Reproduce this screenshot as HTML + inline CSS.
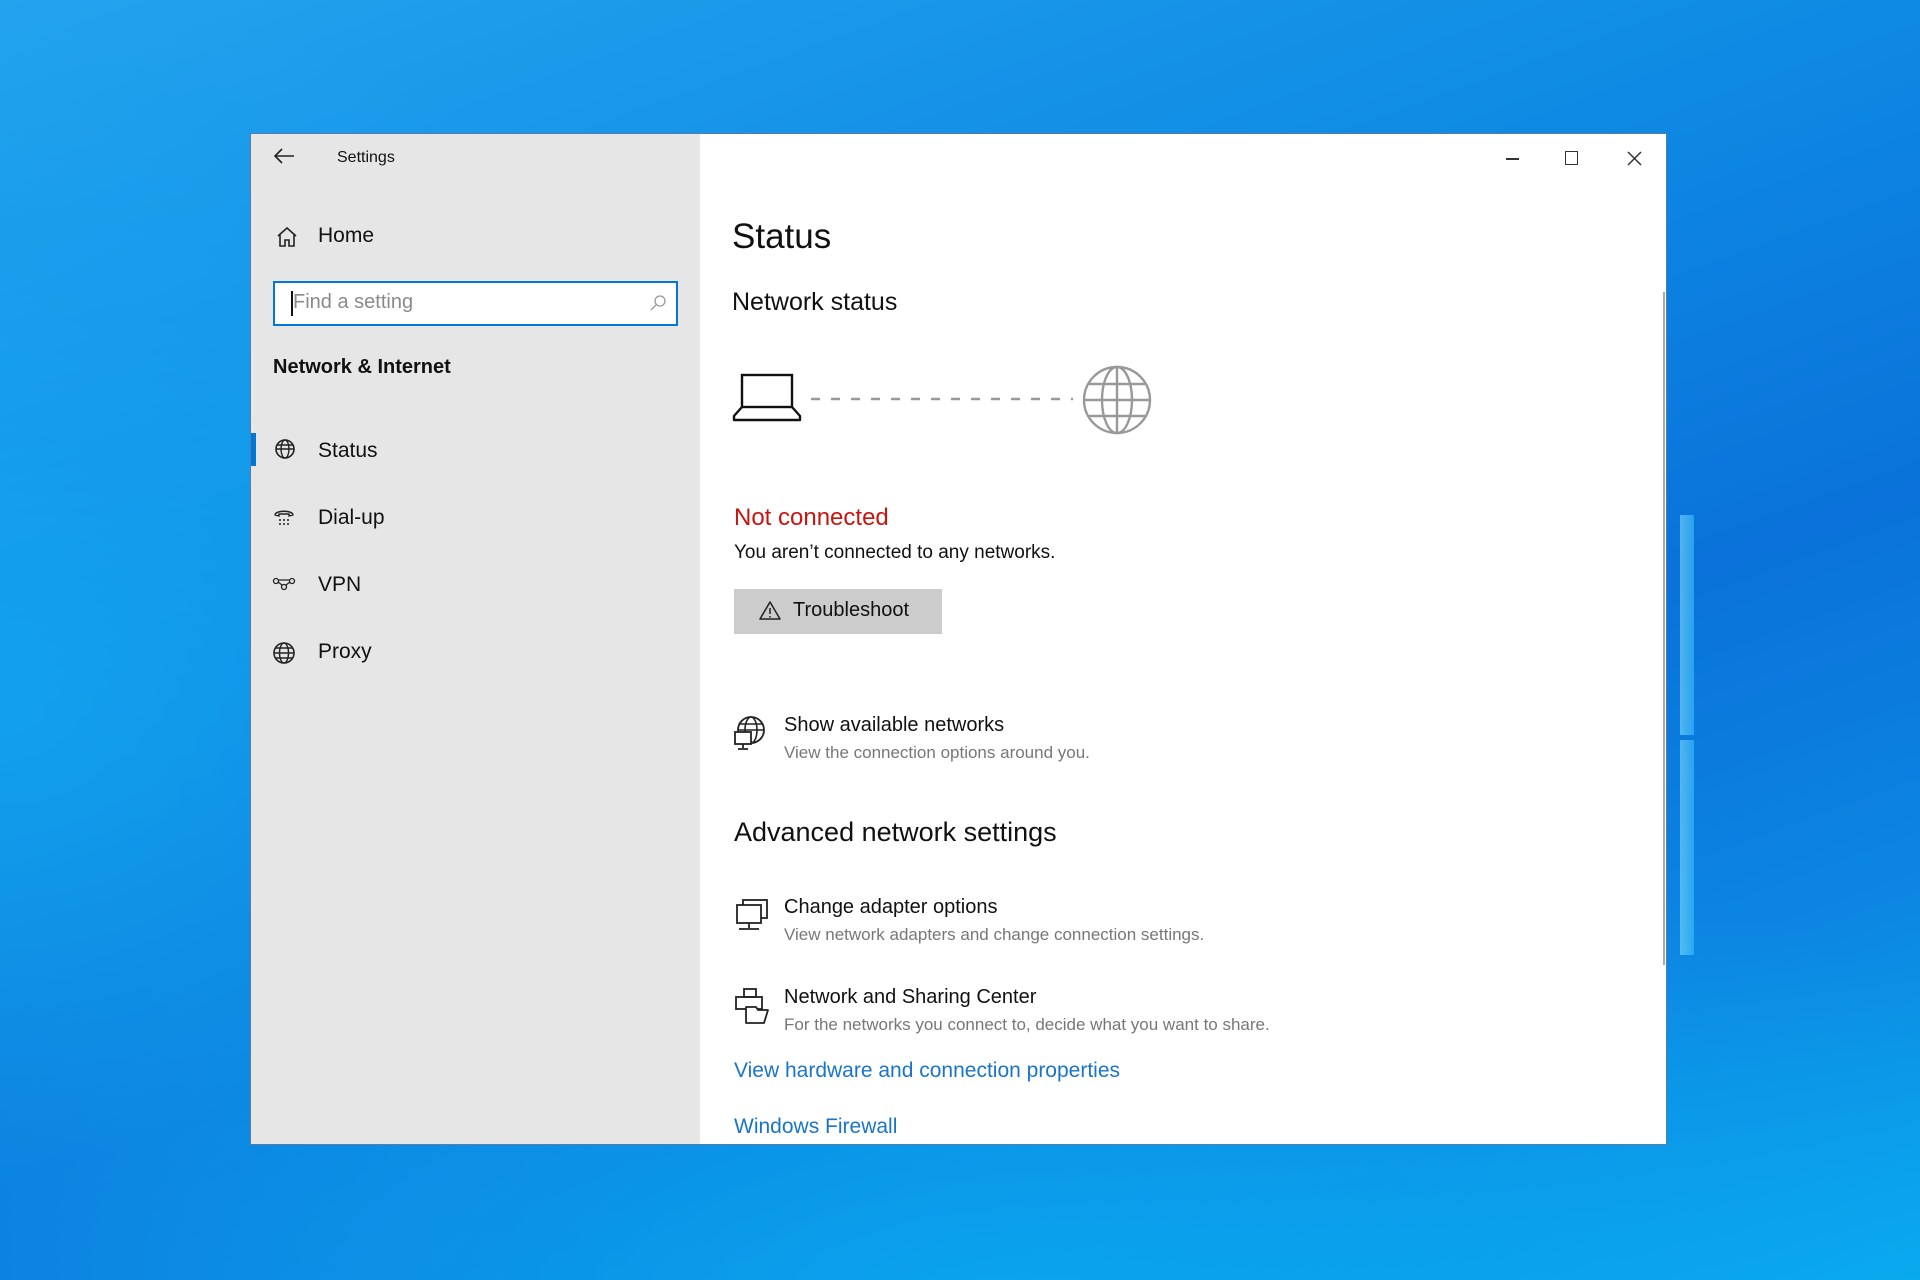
<!DOCTYPE html>
<html><head><meta charset="utf-8"><style>
*{margin:0;padding:0;box-sizing:border-box}
body{width:1920px;height:1280px;overflow:hidden;position:relative;font-family:"Liberation Sans",sans-serif;
background:
radial-gradient(ellipse 900px 700px at 0px 700px,rgba(20,170,240,.7),rgba(20,170,240,0)),
radial-gradient(ellipse 1200px 500px at 1000px 1300px,rgba(10,170,240,.8),rgba(10,170,240,0)),
linear-gradient(160deg,#23a3ee 0%,#0e8ae4 35%,#0a72da 60%,#0c86e2 80%,#0aaaee 100%);}
.a{position:absolute;white-space:nowrap}
.win{position:absolute;left:250px;top:133px;width:1417px;height:1012px;background:#fff;border:1px solid #5a7aa8}
.side{position:absolute;left:0;top:0;width:449px;height:100%;background:#e6e6e6}
.t{color:#111}
.sub{color:#777;font-size:17px}
.lnk{color:#1a75c9;font-size:21px}
</style></head><body>
<div class="a" style="left:1680px;top:515px;width:14px;height:220px;background:linear-gradient(90deg,#8fe6ff,#3cc6ff);opacity:.55"></div>
<div class="a" style="left:1680px;top:740px;width:14px;height:215px;background:linear-gradient(90deg,#8fe6ff,#3cc6ff);opacity:.55"></div>
<div class="win">
 <div class="side">
  <svg class="a" style="left:23px;top:14px" width="22" height="16" viewBox="0 0 22 16"><path d="M20 8H2M8 1L1 8l7 7" fill="none" stroke="#222" stroke-width="1.6"/></svg>
  <div class="a t" style="left:86px;top:15px;font-size:16px">Settings</div>
  <svg class="a" style="left:25px;top:93px" width="22" height="20" viewBox="0 0 22 20"><path d="M2 9L11 1l9 8M4 8v11h5v-6h4v6h5V8" fill="none" stroke="#222" stroke-width="1.6"/></svg>
  <div class="a t" style="left:67px;top:90px;font-size:21px">Home</div>
  <div class="a" style="left:22px;top:147px;width:405px;height:45px;border:2px solid #0078d7;background:#fff"></div>
  <div class="a" style="left:40px;top:157px;width:1.5px;height:25px;background:#111"></div>
  <div class="a" style="left:42px;top:157px;font-size:20px;color:#8a8a8a">Find a setting</div>
  <svg class="a" style="left:398px;top:160px" width="18" height="18" viewBox="0 0 18 18"><circle cx="11" cy="7" r="5" fill="none" stroke="#999" stroke-width="1.3"/><path d="M7 11L2 16" stroke="#999" stroke-width="1.3"/></svg>
  <div class="a t" style="left:22px;top:222px;font-size:20px;font-weight:bold">Network &amp; Internet</div>
  <div class="a" style="left:0;top:299px;width:5px;height:33px;background:#0078d7"></div>
  <svg class="a" style="left:22px;top:305px" width="24" height="22" viewBox="0 0 24 22"><circle cx="12" cy="10" r="9" fill="none" stroke="#222" stroke-width="1.6"/><ellipse cx="12" cy="10" rx="4" ry="9" fill="none" stroke="#222" stroke-width="1.4"/><path d="M3 10h18M4 6h16" stroke="#222" stroke-width="1.4"/></svg>
  <div class="a t" style="left:67px;top:305px;font-size:21px">Status</div>
  <svg class="a" style="left:22px;top:374px" width="22" height="20" viewBox="0 0 22 20"><path d="M2 7c0-5 18-5 18 0l-4 1V6H6v2z" fill="none" stroke="#222" stroke-width="1.4"/><g fill="#222"><circle cx="7" cy="12" r="1"/><circle cx="11" cy="12" r="1"/><circle cx="15" cy="12" r="1"/><circle cx="7" cy="16" r="1"/><circle cx="11" cy="16" r="1"/><circle cx="15" cy="16" r="1"/></g></svg>
  <div class="a t" style="left:67px;top:372px;font-size:21px">Dial-up</div>
  <svg class="a" style="left:21px;top:442px" width="24" height="16" viewBox="0 0 24 16"><circle cx="4" cy="5" r="2.5" fill="none" stroke="#222" stroke-width="1.3"/><circle cx="20" cy="5" r="2.5" fill="none" stroke="#222" stroke-width="1.3"/><circle cx="12" cy="11" r="2.5" fill="none" stroke="#222" stroke-width="1.3"/><path d="M6 6l4 3M18 6l-4 3M7 4h10" stroke="#222" stroke-width="1.3" fill="none"/></svg>
  <div class="a t" style="left:67px;top:439px;font-size:21px">VPN</div>
  <svg class="a" style="left:21px;top:507px" width="24" height="24" viewBox="0 0 24 24"><circle cx="12" cy="12" r="10" fill="none" stroke="#222" stroke-width="1.6"/><ellipse cx="12" cy="12" rx="4.5" ry="10" fill="none" stroke="#222" stroke-width="1.4"/><path d="M2 12h20M4 7h16M4 17h16" stroke="#222" stroke-width="1.4"/></svg>
  <div class="a t" style="left:67px;top:506px;font-size:21px">Proxy</div>
 </div>
 <div class="a" style="left:1255px;top:24px;width:13px;height:1.5px;background:#333"></div>
 <div class="a" style="left:1314px;top:17px;width:13px;height:14px;border:1.5px solid #333"></div>
 <svg class="a" style="left:1376px;top:17px" width="15" height="15" viewBox="0 0 15 15"><path d="M1 1l13 13M14 1L1 14" stroke="#333" stroke-width="1.5"/></svg>
 <div class="a" style="left:1412px;top:158px;width:2px;height:673px;background:#aaa"></div>
 <div class="a t" style="left:481px;top:83px;font-size:35px;font-weight:300">Status</div>
 <div class="a t" style="left:481px;top:154px;font-size:25px">Network status</div>
 <svg class="a" style="left:481px;top:238px" width="72" height="52" viewBox="0 0 72 52"><rect x="10" y="3" width="50" height="32" fill="none" stroke="#111" stroke-width="2.4"/><path d="M10 35L2 44v4h66v-4l-8-9" fill="none" stroke="#111" stroke-width="2.4" stroke-linejoin="round"/></svg>
 <svg class="a" style="left:558px;top:262px" width="266" height="6"><line x1="2" y1="3" x2="264" y2="3" stroke="#999" stroke-width="2.4" stroke-dasharray="9,11"/></svg>
 <svg class="a" style="left:830px;top:230px" width="72" height="72" viewBox="0 0 72 72"><circle cx="36" cy="36" r="33" fill="none" stroke="#999" stroke-width="2.4"/><ellipse cx="36" cy="36" rx="15" ry="33" fill="none" stroke="#999" stroke-width="2.4"/><path d="M36 3v66M3 36h66M8 20h56M8 52h56" stroke="#999" stroke-width="2.4"/></svg>
 <div class="a" style="left:483px;top:370px;font-size:24px;color:#c8160e">Not connected</div>
 <div class="a t" style="left:483px;top:408px;font-size:19px">You aren’t connected to any networks.</div>
 <div class="a" style="left:483px;top:455px;width:208px;height:45px;background:#cccccc"></div>
 <svg class="a" style="left:508px;top:466px" width="22" height="20" viewBox="0 0 22 20"><path d="M11 2L1 19h20z" fill="none" stroke="#222" stroke-width="1.5" stroke-linejoin="round"/><path d="M11 8v6M11 16v1.5" stroke="#222" stroke-width="1.5"/></svg>
 <div class="a t" style="left:542px;top:465px;font-size:20px">Troubleshoot</div>
 <svg class="a" style="left:483px;top:582px" width="34" height="36" viewBox="0 0 34 36"><circle cx="17" cy="14" r="13" fill="none" stroke="#222" stroke-width="1.8"/><ellipse cx="17" cy="14" rx="6" ry="13" fill="none" stroke="#222" stroke-width="1.6"/><path d="M4 14h26M6 8h22" stroke="#222" stroke-width="1.6"/><rect x="1" y="16" width="16" height="12" fill="#fff" stroke="#222" stroke-width="1.8"/><path d="M9 28v4M4 33h10" stroke="#222" stroke-width="1.8"/></svg>
 <div class="a t" style="left:533px;top:580px;font-size:20px">Show available networks</div>
 <div class="a sub" style="left:533px;top:609px">View the connection options around you.</div>
 <div class="a t" style="left:483px;top:683px;font-size:27px">Advanced network settings</div>
 <svg class="a" style="left:484px;top:764px" width="34" height="36" viewBox="0 0 34 36"><rect x="8" y="2" width="24" height="18" fill="none" stroke="#222" stroke-width="1.8"/><rect x="2" y="7" width="24" height="18" fill="#fff" stroke="#222" stroke-width="1.8"/><path d="M14 25v5M4 31h20" stroke="#222" stroke-width="1.8"/></svg>
 <div class="a t" style="left:533px;top:762px;font-size:20px">Change adapter options</div>
 <div class="a sub" style="left:533px;top:791px">View network adapters and change connection settings.</div>
 <svg class="a" style="left:483px;top:853px" width="36" height="38" viewBox="0 0 36 38"><rect x="10" y="2" width="12" height="8" fill="none" stroke="#222" stroke-width="1.8"/><rect x="2" y="10" width="26" height="12" fill="none" stroke="#222" stroke-width="1.8"/><path d="M12 20h10l2 3h10l-4 13H12z" fill="#fff" stroke="#222" stroke-width="1.8" stroke-linejoin="round"/></svg>
 <div class="a t" style="left:533px;top:852px;font-size:20px">Network and Sharing Center</div>
 <div class="a sub" style="left:533px;top:881px">For the networks you connect to, decide what you want to share.</div>
 <div class="a lnk" style="left:483px;top:925px">View hardware and connection properties</div>
 <div class="a lnk" style="left:483px;top:981px">Windows Firewall</div>
</div>
</body></html>
